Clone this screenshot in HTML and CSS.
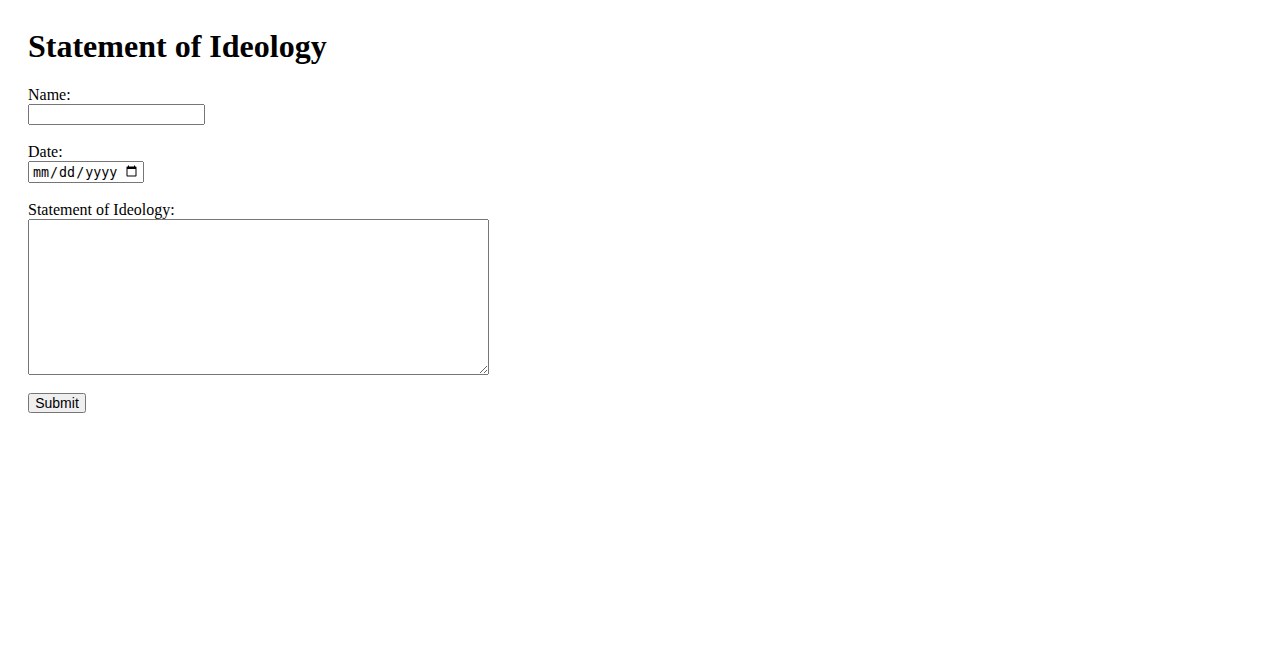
FILE: index.html
```html
<!DOCTYPE html>
<html>
<head>
<meta charset="utf-8">
<title>Statement of Ideology</title>
<link rel="stylesheet" href="styles.css">
</head>
<body>
<div class="page">
  <h1 class="title">Statement of Ideology</h1>
  <form class="form">
    <div class="field">
      <label class="label" for="name">Name:</label>
      <input class="text-input" type="text" id="name">
    </div>
    <div class="field">
      <label class="label" for="date">Date:</label>
      <input class="date-input" type="date" id="date">
    </div>
    <div class="field">
      <label class="label" for="statement">Statement of Ideology:</label>
      <textarea class="statement" id="statement"></textarea>
    </div>
    <div class="field">
      <button class="submit" type="submit">Submit</button>
    </div>
  </form>
</div>
</body>
</html>
```
FILE: styles.css
```css
body {
  margin: 0;
  font-family: "Liberation Serif", "Times New Roman", serif;
  font-size: 16px;
  color: #000;
  background: #fff;
}
.page {
  padding: 28px;
}
.title {
  font-size: 32px;
  font-weight: bold;
  margin: 0 0 21px;
  line-height: 37px;
}
.form {
  display: flex;
  flex-direction: column;
  align-items: flex-start;
  gap: 18px;
}
.field {
  display: flex;
  flex-direction: column;
  align-items: flex-start;
}
.label {
  line-height: 18px;
}
.text-input {
  width: 177px;
  height: 21px;
  box-sizing: border-box;
}
.date-input {
  width: 116px;
  height: 22px;
  box-sizing: border-box;
  padding: 1px 2px;
}
.statement {
  width: 461px;
  height: 156px;
  box-sizing: border-box;
}
.submit {
  width: 58px;
  height: 20px;
  box-sizing: border-box;
  font-family: "Liberation Sans", Arial, sans-serif;
  font-size: 14px;
  padding: 0;
}
```
